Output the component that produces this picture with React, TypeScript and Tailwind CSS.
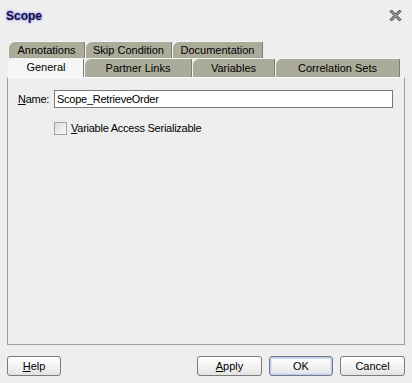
import type { ReactNode } from 'react'

const font = { fontFamily: '"Liberation Sans", "DejaVu Sans", sans-serif' }

// back row and front row tabs, widths taken from the dialog
const backTabs = [
  { label: 'Annotations', width: 'w-[77px]' },
  { label: 'Skip Condition', width: 'w-[87px]' },
  { label: 'Documentation', width: 'w-[91px]' }
]

const frontTabs = [
  { label: 'General', width: 'w-[76px]', active: true },
  { label: 'Partner Links', width: 'w-[108px]', active: false },
  { label: 'Variables', width: 'w-[83px]', active: false },
  { label: 'Correlation Sets', width: 'w-[125px]', active: false }
]

function Tab({ label, width, active }: { label: string; width: string; active?: boolean }) {
  return (
    <div
      className={`${width} flex h-full items-center justify-center rounded-tl-[7px] rounded-tr-[2px] border-l border-t border-r border-l-[#f4f4f4] border-t-[#f4f4f4] border-r-[#7d7d7d] text-[11px] text-black ${
        active ? 'relative z-10 -mb-px bg-[#f6f6f6] pb-px' : 'bg-[#abab99]'
      }`}
    >
      {label}
    </div>
  )
}

function Button({ children, width, focused }: { children: ReactNode; width: string; focused?: boolean }) {
  return (
    <button
      className={`${width} flex h-[20px] items-center justify-center rounded-[3px] border border-[#7b7b7b] bg-gradient-to-b from-[#ffffff] via-[#f4f4f4] to-[#e2e2e2] text-[11px] text-black ${
        focused ? 'shadow-[inset_0_0_0_1px_#b9cdf0,inset_0_0_0_2px_#d4e0f6]' : ''
      }`}
    >
      {children}
    </button>
  )
}

function CloseIcon() {
  return (
    <svg width="15" height="15" viewBox="0 0 15 15">
      <path
        d="M2 3.5 L3.5 2 L7.5 6 L11.5 2 L13 3.5 L9 7.5 L13 11.5 L11.5 13 L7.5 9 L3.5 13 L2 11.5 L6 7.5 Z"
        fill="#9a9a9a"
        stroke="#3c3c3c"
        strokeWidth="1"
        strokeLinejoin="round"
      />
    </svg>
  )
}

export default function App() {
  return (
    <div className="flex h-[383px] w-[412px] flex-col bg-[#eeeeee] text-black" style={font}>
      {/* title bar */}
      <div className="flex h-[30px] items-center justify-between pl-[6px] pr-[9px] pt-[1px]">
        <span className="text-[12px] font-bold text-[#10103a] [text-shadow:0_0_3px_#8c86f0,0_0_2px_#b0a8ff]">
          Scope
        </span>
        <CloseIcon />
      </div>

      {/* tabs */}
      <div className="mt-[11px] flex h-[17px] pl-[8px]">
        {backTabs.map((t) => (
          <Tab key={t.label} label={t.label} width={t.width} />
        ))}
      </div>
      <div className="flex h-[19px] pl-[8px]">
        {frontTabs.map((t) => (
          <Tab key={t.label} label={t.label} width={t.width} active={t.active} />
        ))}
      </div>

      {/* tab panel */}
      <div className="mx-[7px] h-[268px] border border-[#9e9e9e] border-t-[#fbfbfb] bg-[#eeeeee] pl-[10px] pr-[11px] pt-[12px] tracking-[-0.25px]">
        <div className="flex items-center">
          <span className="w-[36px] text-[11px]">
            <span className="underline">N</span>ame:
          </span>
          <div className="flex h-[18px] flex-1 items-center border border-[#7a7a7a] bg-white px-[2px] text-[11px]">
            Scope_RetrieveOrder
          </div>
        </div>
        <div className="mt-[12px] flex items-center pl-[36px]">
          <div className="h-[13px] w-[13px] border border-[#a3a3a3] bg-gradient-to-br from-[#dcdcdc] to-[#fbfbfb]" />
          <span className="ml-[4px] text-[11px]">
            <span className="underline">V</span>ariable Access Serializable
          </span>
        </div>
      </div>

      {/* buttons */}
      <div className="mt-[11px] flex items-center pl-[7px] pr-[7px]">
        <Button width="w-[54px]">
          <span className="underline">H</span>elp
        </Button>
        <div className="flex-1" />
        <div className="flex gap-[7px]">
          <Button width="w-[65px]">
            <span className="underline">A</span>pply
          </Button>
          <Button width="w-[64px]" focused>
            OK
          </Button>
          <Button width="w-[65px]">Cancel</Button>
        </div>
      </div>
    </div>
  )
}
